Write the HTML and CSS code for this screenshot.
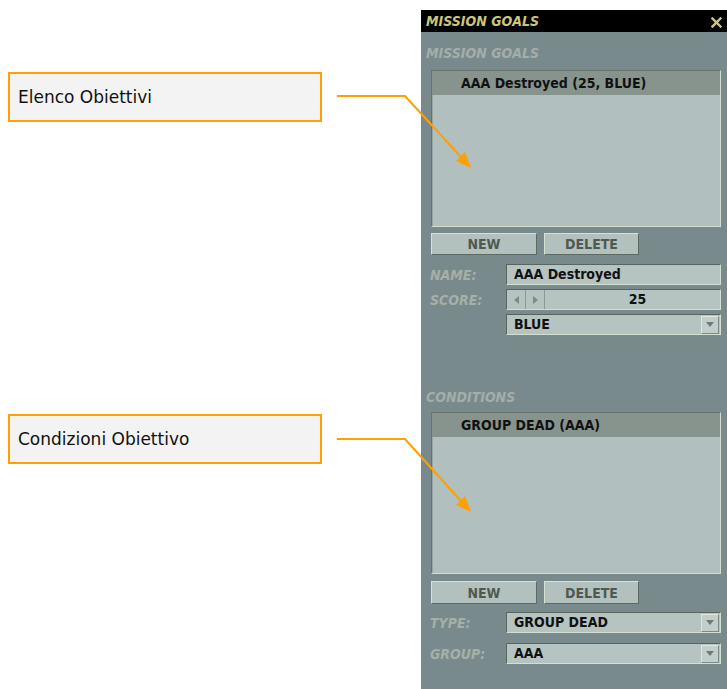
FILE: index.html
```html
<!DOCTYPE html>
<html lang="it">
<head>
  <meta charset="UTF-8" />
  <meta name="viewport" content="width=device-width, initial-scale=1.0"/>
  <title>Mission Goals</title>
  <link rel="stylesheet" href="styles.css">
</head>
<body>
  <div class="page">
    <div class="notes">
      <div class="callout callout-list">Elenco Obiettivi</div>
      <div class="callout callout-cond">Condizioni Obiettivo</div>
    </div>

    <div class="panel">
      <div class="titlebar">
        <span>MISSION GOALS</span>
        <svg class="close" width="11" height="11" viewBox="0 0 11 11">
          <path d="M1.5 1.5 L9.5 9.5 M9.5 1.5 L1.5 9.5" stroke="#cdc67a" stroke-width="2.4" stroke-linecap="square"/>
        </svg>
      </div>

      <div class="section-title">MISSION GOALS</div>
      <div class="listbox goals-list">
        <div class="list-row">AAA Destroyed (25, BLUE)</div>
      </div>
      <div class="buttons">
        <button class="btn btn-new">NEW</button>
        <button class="btn btn-delete">DELETE</button>
      </div>

      <div class="fields">
        <div class="field">
          <label>NAME:</label>
          <div class="input">AAA Destroyed</div>
        </div>
        <div class="field">
          <label>SCORE:</label>
          <div class="input spinner">
            <span class="spin"><i class="tri tri-left"></i></span>
            <span class="spin"><i class="tri tri-right"></i></span>
            <span class="spin-value">25</span>
          </div>
        </div>
        <div class="field">
          <label></label>
          <div class="input select">BLUE<span class="drop"><i class="tri tri-down"></i></span></div>
        </div>
      </div>

      <div class="section-title conditions">CONDITIONS</div>
      <div class="listbox cond-list">
        <div class="list-row">GROUP DEAD (AAA)</div>
      </div>
      <div class="buttons buttons-cond">
        <button class="btn btn-new">NEW</button>
        <button class="btn btn-delete">DELETE</button>
      </div>

      <div class="fields fields-cond">
        <div class="field">
          <label>TYPE:</label>
          <div class="input select">GROUP DEAD<span class="drop"><i class="tri tri-down"></i></span></div>
        </div>
        <div class="field">
          <label>GROUP:</label>
          <div class="input select">AAA<span class="drop"><i class="tri tri-down"></i></span></div>
        </div>
      </div>
    </div>
  </div>

  <!-- callout leader lines -->
  <svg class="arrows" width="727" height="689" viewBox="0 0 727 689">
    <polyline points="337,96 405,96 461,157" fill="none" stroke="#ffa000" stroke-width="2"/>
    <polygon points="471,168 456,161 465,152" fill="#ffa000"/>
    <polyline points="337,439 405,439 461,501" fill="none" stroke="#ffa000" stroke-width="2"/>
    <polygon points="471,512 456,505 465,496" fill="#ffa000"/>
  </svg>
</body>
</html>
```

FILE: styles.css
```css
body {
  margin: 0;
  background: #fff;
  font-family: 'DejaVu Sans', sans-serif;
}

.page {
  display: flex;
  padding-top: 10px;
  height: 679px;
}

.notes {
  width: 421px;
  flex: none;
}

.callout {
  box-sizing: border-box;
  width: 314px;
  height: 50px;
  margin-left: 8px;
  padding: 0 0 0 8px;
  display: flex;
  align-items: center;
  background: #f3f3f3;
  border: 2px solid #ffa000;
  font-size: 17px;
  color: #111;
}

.callout-list {
  margin-top: 62px;
}

.callout-cond {
  margin-top: 292px;
}

.arrows {
  position: absolute;
  top: 0;
  left: 0;
  pointer-events: none;
}

/* panel */
.panel {
  width: 306px;
  background: #798a8c;
  font-family: 'DejaVu Sans Condensed', 'DejaVu Sans', sans-serif;
  font-stretch: condensed;
  font-weight: bold;
  font-size: 14px;
}

.titlebar {
  height: 22px;
  background: #000;
  color: #cdc67a;
  font-style: italic;
  display: flex;
  align-items: center;
  justify-content: space-between;
  padding: 0 5px;
}

.titlebar .close {
  margin-top: 3px;
}

.section-title {
  padding: 11px 0 0 5px;
  line-height: 20px;
  margin-bottom: 7px;
  color: #a4aea8;
  font-style: italic;
}

.section-title.conditions {
  margin-top: 52px;
  padding-top: 0;
  margin-bottom: 5px;
}

.listbox {
  box-sizing: border-box;
  margin: 0 6px 0 10px;
  height: 157px;
  background: #b1bfbf;
  border: 1px solid;
  border-color: #66736c #d3dece #d3dece #66736c;
  box-shadow: inset 1px 1px 0 #9aa59f;
}

.cond-list {
  height: 162px;
}

.list-row {
  height: 24px;
  line-height: 24px;
  padding-left: 29px;
  background: #87948e;
  color: #111;
}

.buttons {
  display: flex;
  gap: 7px;
  margin: 6px 0 0 10px;
}

.buttons-cond {
  margin-top: 7px;
}

.btn {
  box-sizing: border-box;
  height: 22px;
  padding: 0;
  background: #b2c0be;
  border: 1px solid;
  border-color: #d6e1d1 #5d6a62 #5d6a62 #d6e1d1;
  font: inherit;
  color: #4e5a4f;
}

.buttons-cond .btn {
  height: 23px;
}

.btn-new {
  width: 106px;
}

.btn-delete {
  width: 95px;
}

.fields {
  margin-top: 9px;
  display: flex;
  flex-direction: column;
  gap: 4px;
}

.fields-cond {
  margin-top: 8px;
  gap: 10px;
}

.field {
  display: flex;
  align-items: center;
  height: 21px;
}

.field label {
  width: 85px;
  padding-left: 9px;
  box-sizing: border-box;
  color: #a7b0a6;
  font-style: italic;
}

.input {
  box-sizing: border-box;
  width: 215px;
  height: 21px;
  line-height: 19px;
  padding-left: 7px;
  background: #b5c3c1;
  border: 1px solid;
  border-color: #59655d #d4dfcf #d4dfcf #59655d;
  color: #111;
  display: flex;
  align-items: center;
}

.spinner {
  padding-left: 0;
}

.spin {
  width: 19px;
  height: 19px;
  display: flex;
  align-items: center;
  justify-content: center;
  border-right: 1px solid #8c9891;
  box-sizing: border-box;
}

.spin-value {
  flex: 1;
  text-align: center;
  padding-left: 10px;
}

.select {
  justify-content: space-between;
  padding-right: 1px;
}

.drop {
  box-sizing: border-box;
  width: 18px;
  height: 18px;
  background: #c2cecb;
  border: 1px solid;
  border-color: #dfe8dc #7d8a83 #7d8a83 #dfe8dc;
  display: flex;
  align-items: center;
  justify-content: center;
}

.tri {
  width: 0;
  height: 0;
  border-style: solid;
}

.tri-left {
  border-width: 4px 5px 4px 0;
  border-color: transparent #7e8a84 transparent transparent;
}

.tri-right {
  border-width: 4px 0 4px 5px;
  border-color: transparent transparent transparent #7e8a84;
}

.tri-down {
  border-width: 5px 4px 0 4px;
  border-color: #6f7a74 transparent transparent transparent;
}
```
